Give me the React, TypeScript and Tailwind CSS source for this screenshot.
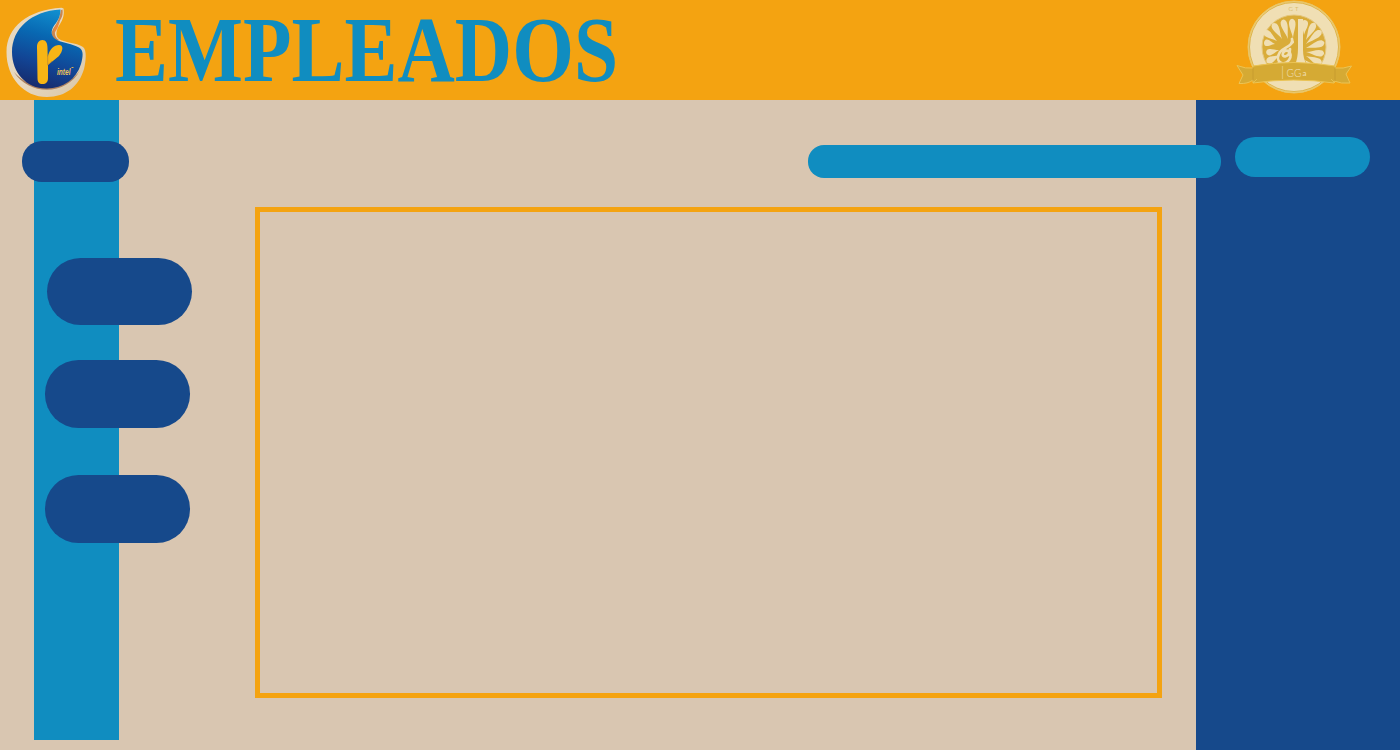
function RintelLogo() {
  return (
    <svg width="100" height="100" viewBox="0 0 100 100" className="shrink-0">
      <defs>
        <linearGradient id="drop" x1="0.65" y1="0" x2="0.4" y2="1">
          <stop offset="0" stopColor="#1190d0" />
          <stop offset="0.35" stopColor="#0868b2" />
          <stop offset="0.7" stopColor="#124494" />
          <stop offset="1" stopColor="#172b6c" />
        </linearGradient>
        <linearGradient id="rim" x1="0" y1="0" x2="1" y2="1">
          <stop offset="0" stopColor="#e5d7bf" />
          <stop offset="0.5" stopColor="#e8d9c0" />
          <stop offset="1" stopColor="#d8c5a6" />
        </linearGradient>
      </defs>
      <path
        d="M63.5 8.5 C64.5 15 63 19 60 24 C56 30 55 36 59 39 C64 42.5 76 42.5 83 47 C87 50 86 61 84 69 C79 86 66 97 47 97 C24 97 6.500 78 6.500 52 C6.500 27 28 10 61.500 7.800 Z"
        fill="url(#rim)"
      />
      <path
        d="M62.500 9.500 C63.500 17 60 20 57 26 C53 33 55 38 60 40.500 L56 40 C50 37 51 31 55 26 C59 20 60 15 61 10 Z"
        fill="#c8864f"
      />
      <path d="M57 24 L60 21 L57.500 28 L54.500 33 L54 29 Z" fill="#ef883c" />
      <path d="M14 72 C29 96 67 96 80 70 C70 87 34 95 14 72 Z" fill="#ad8260" />
      <path
        d="M60.500 9.500 C60.500 16 58 21 54.500 25 C50 31 51 37 57 40 C64 43.500 72 43.500 79 47.500 C84 50 83 57 81 64 C76 80 63 88 47 88.500 C27 89 12 73 12 52 C12 29 31 11 60.500 9.500 Z"
        fill="url(#drop)"
      />
      <path
        d="M42.300 40 C46 40 47.500 43 47.500 48 L47.700 57 C49.500 49 54 45 59 45 C64 45 63 51 59 56 L48 65 L48 78 C48 82 46 84 42.500 84 C39 84 37.500 82 37.500 78 L37 47 C37 43 39 40 42.300 40 Z"
        fill="#f7b515"
      />
      <path d="M47.700 55 L47.700 65 L52 61" fill="none" stroke="#b98430" strokeWidth="0.7" />
      <text
        x="57"
        y="74.500"
        fontFamily="Liberation Sans, sans-serif"
        fontSize="9.500"
        fontWeight="bold"
        fontStyle="italic"
        textLength="13.500"
        lengthAdjust="spacingAndGlyphs"
        fill="#eec35c"
      >
        intel
      </text>
      <path d="M71.500 67.500 h2" stroke="#d7ac51" strokeWidth="1" />
    </svg>
  );
}

const leaves = [
  { x: 1275, y: 44, a: -82, l: 11 },
  { x: 1277, y: 41, a: -53, l: 16 },
  { x: 1282, y: 39, a: -30, l: 18 },
  { x: 1288, y: 39, a: -15, l: 20 },
  { x: 1293, y: 38, a: -3, l: 19 },
  { x: 1279, y: 50, a: -103, l: 13 },
  { x: 1280, y: 55, a: -118, l: 15 },
  { x: 1281, y: 61, a: -132, l: 13 },
  { x: 1304, y: 35, a: 4, l: 15 },
  { x: 1306, y: 40, a: 27, l: 19 },
  { x: 1306, y: 44, a: 49, l: 20 },
  { x: 1306, y: 48, a: 73, l: 19 },
  { x: 1306, y: 52, a: 95, l: 18 },
  { x: 1306, y: 56, a: 115, l: 17 },
  { x: 1305, y: 60, a: 137, l: 14 },
];

function Seal() {
  return (
    <svg width="120" height="100" viewBox="1235 0 120 100" className="shrink-0">
      <circle cx="1294" cy="47" r="46" fill="#edcf78" stroke="#e8c567" strokeWidth="1" />
      <circle cx="1294" cy="47" r="44.500" fill="#f0dfb4" stroke="#d9ab39" strokeWidth="0.8" />
      <circle cx="1294" cy="47" r="32" fill="#d9ac39" stroke="#e5c77d" strokeWidth="1" />
      {leaves.map(({ x, y, a, l }) => (
        <path
          key={`${x}-${a}`}
          d={`M0 0 C-1 ${-l * 0.35} -4.500 ${-l * 0.65} -2.800 ${-l * 0.9} Q0 ${-l * 1.12} 2.800 ${-l * 0.9} C4.500 ${-l * 0.65} 1 ${-l * 0.35} 0 0 Z`}
          transform={`translate(${x} ${y}) rotate(${a})`}
          fill="#f0dfb4"
        />
      ))}
      <path d="M1298 19 H1303 V50 Q1303 59 1307 65 H1295 Q1298 58 1298 48 Z" fill="#f0dfb4" />
      <path
        d="M1292 39 C1294 46 1284 47 1280 52 C1274 61 1283 68 1289 60 C1294 53 1286 47 1283 53 C1281 58 1290 58 1290 49"
        fill="none"
        stroke="#f0dfb4"
        strokeWidth="2.700"
        strokeLinecap="round"
      />
      <circle cx="1292.500" cy="42" r="1.600" fill="#f0dfb4" />
      <path
        d="M1237 65.500 Q1246 69 1253 68 V66 Q1294 59 1335 66 V68 Q1343 69 1351.500 66 L1346 74 L1350 83 Q1341 84 1334 81 V83 Q1294 77 1253 83 V80 Q1248 84 1239 83.500 L1243 75 Z"
        fill="#d5aa34"
        stroke="#ebc455"
        strokeWidth="1"
      />
      <path d="M1253 67 V81 M1335 67 V81" stroke="#bf952c" strokeWidth="0.6" />
      <path d="M1253 83 L1257 79 M1335 83 L1331 79" stroke="#ebc455" strokeWidth="0.8" />
      <g fontFamily="Lato, sans-serif" textAnchor="middle">
        <text x="1294.500" y="10.500" fontSize="6" fontWeight="300" letterSpacing="2" fill="#c99f36">
          GT
        </text>
        <text x="1282.500" y="76.500" fontSize="13" fontWeight="300" fill="#f0dfb4">|</text>
        <text x="1294" y="76.500" fontSize="12" fontWeight="300" textLength="15" lengthAdjust="spacingAndGlyphs" fill="#f0dfb4">
          GG
        </text>
        <text x="1304.500" y="76" fontSize="8" fill="#f0dfb4">
          a
        </text>
      </g>
    </svg>
  );
}

function SideMenu() {
  return (
    <aside className="ml-[34px] flex h-[639.5px] w-[85px] shrink-0 flex-col items-start bg-[#108dc0] pt-[41px]">
      <button className="-ml-[12.5px] h-[40.5px] w-[107px] shrink-0 rounded-[20px] bg-[#16498b]" />
      <button className="mt-[76.5px] ml-[13px] h-[67px] w-[145px] shrink-0 rounded-[33.5px] bg-[#16498b]" />
      <button className="mt-[35px] ml-[10.7px] h-[67.5px] w-[145px] shrink-0 rounded-[33.5px] bg-[#16498b]" />
      <button className="mt-[47.5px] ml-[10.7px] h-[67.5px] w-[145px] shrink-0 rounded-[33.5px] bg-[#16498b]" />
    </aside>
  );
}

export default function App() {
  return (
    <div className="flex h-[750px] w-[1400px] flex-col overflow-hidden bg-[#d9c6b1]">
      <header className="flex h-[100px] shrink-0 items-center bg-[#f4a311] pr-[45px]">
        <RintelLogo />
        <h1 className="ml-[15px] w-[503px] origin-left scale-x-[0.845] pb-[2px] font-['Liberation_Serif',serif] text-[94px] leading-[100px] font-bold whitespace-nowrap text-[#108dc0]">
          EMPLEADOS
        </h1>
        <div className="ml-auto h-[100px]">
          <Seal />
        </div>
      </header>
      <div className="flex min-h-0 flex-1">
        <SideMenu />
        <main className="z-10 ml-[136px] flex w-[940.5px] shrink-0 flex-col pt-[45px]">
          <div className="ml-[553px] h-[32.5px] w-[412.5px] shrink-0 rounded-[16px] bg-[#108dc0]" />
          <section className="mt-[29.5px] h-[490.5px] w-[907px] shrink-0 border-5 border-[#f4a311]" />
        </main>
        <aside className="flex flex-1 items-start bg-[#16498b] pt-[37px] pl-[39.5px]">
          <button className="h-[40px] w-[135px] rounded-[20px] bg-[#108dc0]" />
        </aside>
      </div>
    </div>
  );
}
